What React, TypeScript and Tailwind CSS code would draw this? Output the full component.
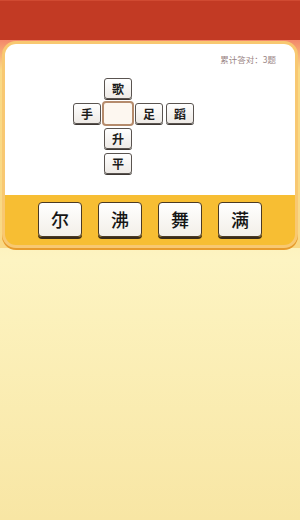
export default function App() {
  const cells: Array<{ ch: string; col: number; row: number }> = [
    { ch: "歌", col: 2, row: 1 },
    { ch: "手", col: 1, row: 2 },
    { ch: "足", col: 3, row: 2 },
    { ch: "蹈", col: 4, row: 2 },
    { ch: "升", col: 2, row: 3 },
    { ch: "平", col: 2, row: 4 },
  ];
  const colClass = ["", "col-start-1", "col-start-2", "col-start-3", "col-start-4"];
  const rowClass = ["", "row-start-1", "row-start-2", "row-start-3", "row-start-4"];

  return (
    <div
      className="w-[300px] h-[520px] overflow-hidden bg-gradient-to-b from-[#f9d985] via-[#fdf4c2] to-[#f8e6a4]"
      style={{ fontFamily: '"Noto Sans CJK SC", "Noto Sans", sans-serif' }}
    >
      <div className="h-[40px] bg-[#c23a24] border-t border-[#d04a32]" />
      <div className="bg-gradient-to-b from-[#f3876a] to-[#f9d985] to-[30px] px-[2px] pt-[1px]">
        <div className="rounded-[14px] border-[3px] border-[#f8c871] bg-[#f7be33] shadow-[0_2px_0_#e79b2c]">
          <div className="bg-white rounded-t-[11px] h-[151px] relative">
            <div className="absolute right-[19px] top-[9px] text-[8.5px] text-[#9a8585]">累计答对：3题</div>
            <div className="pl-[68px] pt-[34px]">
              <div className="grid grid-cols-[repeat(4,28px)] grid-rows-[repeat(4,21px)] gap-x-[3px] gap-y-[4px]">
                {cells.map((c) => (
                  <div
                    key={c.ch}
                    className={`${colClass[c.col]} ${rowClass[c.row]} flex items-center justify-center rounded-[3px] border border-[#5a5450] bg-gradient-to-b from-white to-[#eeeae6] shadow-[0_1px_0_#3d3733] text-[12px] font-bold text-[#1c1c1c] leading-none`}
                  >
                    {c.ch}
                  </div>
                ))}
                <div className="col-start-2 row-start-2 -m-[2px] rounded-[4px] border-2 border-[#b58b6c] bg-[#fdf7f0]" />
              </div>
            </div>
          </div>
          <div className="h-[50px] flex items-center justify-center gap-[16px] pb-[2px]">
            {["尔", "沸", "舞", "满"].map((ch) => (
              <div
                key={ch}
                className="w-[44px] h-[35px] flex items-center justify-center rounded-[4px] border border-[#4a3a24] bg-gradient-to-b from-white to-[#f3efe8] shadow-[0_2px_0_#3a2b18] text-[18px] font-medium text-[#151515] leading-none"
              >
                {ch}
              </div>
            ))}
          </div>
        </div>
      </div>
    </div>
  );
}
